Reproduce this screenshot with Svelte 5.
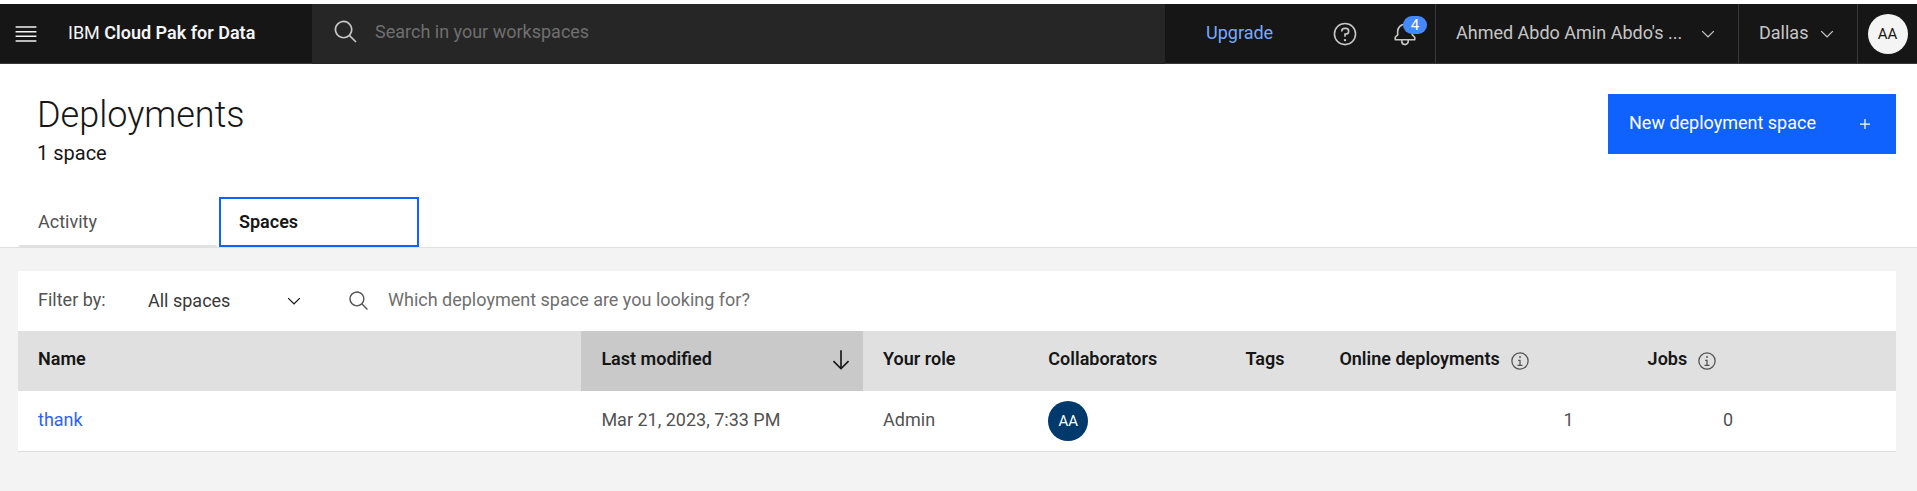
<script>
  let query = $state('');
  let spaceQuery = $state('');
  let filter = $state('All spaces');
  const spaces = [
    { name: 'thank', modified: 'Mar 21, 2023, 7:33 PM', role: 'Admin', who: 'AA', tags: '', online: 1, jobs: 0 }
  ];
</script>

{#snippet chevron()}
  <svg class="i20" viewBox="0 0 16 16" aria-hidden="true"><path d="M8 11L3 6 3.7 5.3 8 9.6 12.3 5.3 13 6z" /></svg>
{/snippet}

{#snippet magnifier(size)}
  <svg class={size} viewBox="0 0 32 32" aria-hidden="true"><path d="M29,27.5859l-7.5521-7.5521a11.0177,11.0177,0,1,0-1.4141,1.4141L27.5859,29ZM4,13a9,9,0,1,1,9,9A9.01,9.01,0,0,1,4,13Z" /></svg>
{/snippet}

{#snippet info()}
  <svg class="i20 info" viewBox="0 0 32 32" aria-hidden="true"><path d="M17,22V14H13v2h2v6H12v2h8V22Z" /><path d="M16,8a1.5,1.5,0,1,0,1.5,1.5A1.5,1.5,0,0,0,16,8Z" /><path d="M16,30A14,14,0,1,1,30,16,14,14,0,0,1,16,30ZM16,4A12,12,0,1,0,28,16,12,12,0,0,0,16,4Z" /></svg>
{/snippet}

<div class="page">
  <header class="bar">
    <div class="brand">
      <button class="menu" aria-label="Menu">
        <svg class="i26" viewBox="0 0 20 20"><path d="M2 14.8H18V16H2z M2 11.2H18V12.4H2z M2 7.6H18V8.8H2z M2 4H18V5.2H2z" /></svg>
      </button>
      <a class="product" href="#home">IBM <b>Cloud Pak for Data</b></a>
    </div>
    <label class="search">
      {@render magnifier('i26')}
      <input type="text" aria-label="Search" placeholder="Search in your workspaces" bind:value={query} />
    </label>
    <nav class="tools">
      <a class="upgrade" href="#upgrade">Upgrade</a>
      <button class="tool" aria-label="Help">
        <svg class="i26" viewBox="0 0 32 32"><path d="M16,2A14,14,0,1,0,30,16,14,14,0,0,0,16,2Zm0,26A12,12,0,1,1,28,16,12,12,0,0,1,16,28Z" /><circle cx="16" cy="23.5" r="1.5" /><path d="M17,8H15.5A4.49,4.49,0,0,0,11,12.5V13h2v-.5A2.5,2.5,0,0,1,15.5,10H17a2.5,2.5,0,0,1,0,5H15v4.5h2V17a4.5,4.5,0,0,0,0-9Z" /></svg>
      </button>
      <button class="tool" aria-label="Notifications">
        <svg class="i26" viewBox="0 0 32 32"><path d="M28.7071,19.293,26,16.5859V13a10.0136,10.0136,0,0,0-9-9.9492V1H15V3.0508A10.0136,10.0136,0,0,0,6,13v3.5859L3.2929,19.293A1,1,0,0,0,3,20v3a1,1,0,0,0,1,1h7v.7768a5.152,5.152,0,0,0,4.5,5.1987A5.0057,5.0057,0,0,0,21,25V24h7a1,1,0,0,0,1-1V20A1,1,0,0,0,28.7071,19.293ZM19,25a3,3,0,0,1-6,0V24h6Zm8-3H5V20.4141L7.707,17.707A1,1,0,0,0,8,17V13a8,8,0,0,1,16,0v4a1,1,0,0,0,.293.707L27,20.4141Z" /></svg>
        <span class="badge">4</span>
      </button>
      <button class="switch account"><span>Ahmed Abdo Amin Abdo's ...</span>{@render chevron()}</button>
      <button class="switch region"><span>Dallas</span>{@render chevron()}</button>
      <button class="profile" aria-label="Profile"><span class="avatar light">AA</span></button>
    </nav>
  </header>

  <section class="head">
    <div class="title-row">
      <div>
        <h1>Deployments</h1>
        <p>1 space</p>
      </div>
      <button class="primary">
        <span>New deployment space</span>
        <svg class="i20" viewBox="0 0 32 32" aria-hidden="true"><path d="M17 15 17 8 15 8 15 15 8 15 8 17 15 17 15 24 17 24 17 17 24 17 24 15z" /></svg>
      </button>
    </div>
    <div class="tabs" role="tablist">
      <button class="tab" role="tab" aria-selected="false">Activity</button>
      <button class="tab active" role="tab" aria-selected="true">Spaces</button>
    </div>
  </section>

  <main>
    <div class="filters">
      <label class="by" for="filter">Filter by:</label>
      <div class="select">
        <select id="filter" bind:value={filter}>
          <option>All spaces</option>
        </select>
        {@render chevron()}
      </div>
      <label class="find">
        {@render magnifier('i22')}
        <input type="text" aria-label="Find a space" placeholder="Which deployment space are you looking for?" bind:value={spaceQuery} />
      </label>
    </div>
    <table>
      <colgroup>
        <col class="c-name" /><col class="c-mod" /><col class="c-role" /><col class="c-collab" />
        <col class="c-tags" /><col class="c-online" /><col class="c-jobs" /><col />
      </colgroup>
      <thead>
        <tr>
          <th>Name</th>
          <th class="sorted">
            <div class="sort">Last modified
              <svg class="i26" viewBox="0 0 32 32" aria-hidden="true"><path d="M24.59 16.59 17 24.17 17 4 15 4 15 24.17 7.41 16.59 6 18 16 28 26 18 24.59 16.59z" /></svg>
            </div>
          </th>
          <th>Your role</th>
          <th>Collaborators</th>
          <th>Tags</th>
          <th><div class="hint">Online deployments {@render info()}</div></th>
          <th><div class="hint end">Jobs {@render info()}</div></th>
          <th></th>
        </tr>
      </thead>
      <tbody>
        {#each spaces as s}
          <tr>
            <td><a href="#space">{s.name}</a></td>
            <td>{s.modified}</td>
            <td>{s.role}</td>
            <td class="who"><span class="avatar">{s.who}</span></td>
            <td>{s.tags}</td>
            <td class="num">{s.online}</td>
            <td class="num">{s.jobs}</td>
            <td></td>
          </tr>
        {/each}
      </tbody>
    </table>
  </main>
</div>

<style>
  :global(body) { background: #f3f3f3; }
  .page { font: 400 18px/24px Roboto, "Liberation Sans", sans-serif; color: #161616; }
  .page *, .page { box-sizing: border-box; }
  button, input, select { font: inherit; color: inherit; background: none; border: 0; padding: 0; margin: 0; border-radius: 0; }
  a { color: inherit; text-decoration: none; }
  svg { display: block; flex: none; fill: currentColor; }
  .i20 { width: 20px; height: 20px; }
  .i22 { width: 22px; height: 22px; }
  .i26 { width: 26px; height: 26px; }

  .bar { display: flex; height: 64px; border-top: 4px solid #fff; background: #161616; color: #c6c6c6; }
  .brand { width: 312px; display: flex; align-items: center; border-bottom: 1px solid #393939; color: #f4f4f4; }
  .menu { padding: 0 13px; }
  .product { padding: 0 0 2px 16px; }
  .product b { font-weight: 600; }
  .search { flex: 1; display: flex; align-items: center; gap: 16px; padding: 0 21px 4px; background: #262626; }
  .search input { flex: 1; min-width: 0; outline: 0; }
  .search input::placeholder { color: #6f6f6f; opacity: 1; }
  .tools { display: flex; align-items: stretch; border-bottom: 1px solid #393939; }
  .upgrade { display: flex; align-items: center; padding: 0 30px 2px 41px; width: 150px; color: #78a9ff; }
  .tool { position: relative; width: 60px; display: flex; align-items: center; justify-content: center; }
  .badge { position: absolute; top: 12px; right: 8px; width: 24px; height: 18px; border-radius: 9px; background: #4589ff; color: #fff; font-size: 15px; line-height: 18px; }
  .switch { display: flex; align-items: center; justify-content: space-between; padding: 0 20px; border-left: 1px solid #393939; }
  .switch span { padding-bottom: 2px; }
  .account { width: 303px; }
  .region { width: 119px; }
  .profile { width: 60px; display: flex; align-items: center; justify-content: center; border-left: 1px solid #393939; }
  .avatar { display: flex; align-items: center; justify-content: center; width: 40px; height: 40px; border-radius: 50%; background: #003a6d; color: #fff; font-size: 15px; }
  .avatar.light { background: #f4f4f4; color: #161616; }

  .head { background: #fff; border-bottom: 1px solid #e0e0e0; padding: 30px 21px 0 18px; }
  .title-row { display: flex; justify-content: space-between; align-items: flex-start; min-height: 103px; padding-left: 19px; }
  h1 { margin: 0; font-size: 36px; line-height: 42px; font-weight: 300; }
  p { margin: 5px 0 0; font-size: 20px; line-height: 24px; }
  .primary { display: flex; align-items: center; justify-content: space-between; width: 288px; height: 60px; padding: 0 21px; background: #0f62fe; color: #fff; }
  .primary span { padding-bottom: 2px; }
  .tabs { display: flex; gap: 1px; }
  .tab { width: 200px; height: 50px; padding: 0 18px; text-align: left; color: #525252; border: 2px solid transparent; border-bottom-color: #e0e0e0; }
  .tab.active { border-color: #0f62fe; color: #161616; font-weight: 600; }

  main { padding: 23px 21px 40px 18px; }
  .filters { display: flex; align-items: center; height: 60px; background: #fff; padding-left: 20px; color: #525252; }
  .by { width: 110px; padding-bottom: 2px; }
  .select { display: flex; position: relative; width: 180px; color: #161616; }
  .select select { appearance: none; width: 100%; height: 40px; outline: 0; color: #393939; }
  .select svg { position: absolute; right: 24px; top: 10px; pointer-events: none; }
  .find { flex: 1; display: flex; align-items: center; gap: 18px; padding-left: 20px; }
  .find input { flex: 1; min-width: 0; outline: 0; padding-bottom: 2px; }
  .find input::placeholder { color: #6f6f6f; opacity: 1; }

  table { width: 100%; table-layout: fixed; border-collapse: collapse; }
  .c-name { width: 30%; }
  .c-mod { width: 15%; }
  .c-role { width: 8.8%; }
  .c-collab { width: 10.5%; }
  .c-tags { width: 5%; }
  .c-online { width: 14.6%; }
  .c-jobs { width: 8.5%; }
  th, td { height: 60px; padding: 0 20px 2px; text-align: left; }
  th { background: #e0e0e0; font-weight: 600; padding-bottom: 4px; }
  th.sorted { background: #c9c9c9; padding-right: 9px; }
  td { background: #fff; color: #525252; border-bottom: 1px solid #dcdcdc; }
  td.who { padding-bottom: 0; }
  td a { color: #2c63f6; }
  td.num { text-align: right; }
  .sort { display: flex; align-items: center; justify-content: space-between; }
  .sort svg { margin-top: 2px; }
  .hint { display: flex; align-items: center; gap: 10px; }
  .hint.end { justify-content: flex-end; padding-right: 16px; }
  .info { color: #525252; margin-top: 4px; }
</style>
